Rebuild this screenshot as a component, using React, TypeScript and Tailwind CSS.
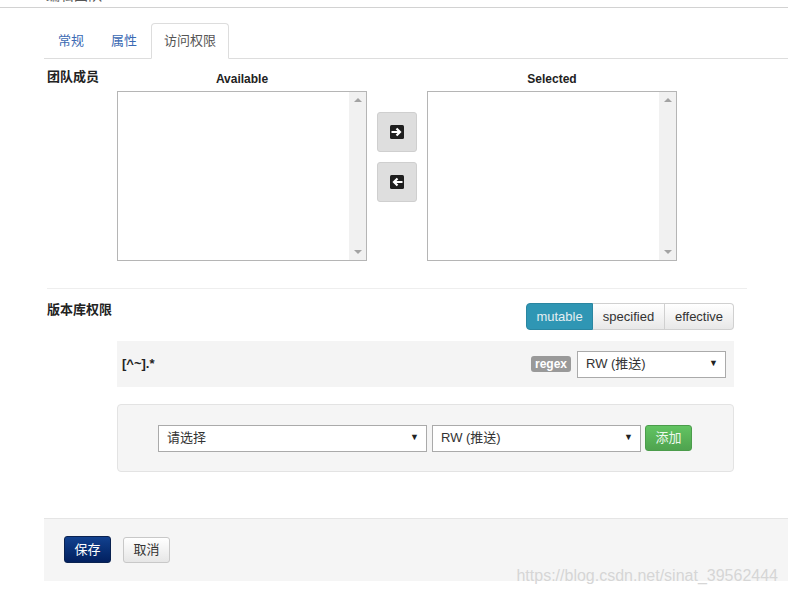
import React from 'react';

const font = 'font-["Liberation_Sans","Noto_Sans_CJK_SC",sans-serif]';

function ListBox() {
  return (
    <div className="flex h-[170px] w-[250px] border border-[#b5b5b5] bg-white">
      <div className="flex-1" />
      <div className="flex w-[17px] flex-col items-center justify-between bg-[#f1f1f1] py-[6px]">
        <span className="h-0 w-0 border-x-[4px] border-b-[4px] border-x-transparent border-b-[#a3a3a3]" />
        <span className="h-0 w-0 border-x-[4px] border-t-[4px] border-x-transparent border-t-[#a3a3a3]" />
      </div>
    </div>
  );
}

function MoveIcon({ dir }: { dir: 'right' | 'left' }) {
  return (
    <svg width="14" height="14" viewBox="0 0 14 14">
      <rect x="0" y="0" width="14" height="14" rx="1.5" fill="#1e1e1e" />
      {dir === 'right' ? (
        <path d="M1.5 7 H10 M6.5 3.5 L10 7 L6.5 10.5" stroke="#fff" strokeWidth="2.2" fill="none" />
      ) : (
        <path d="M12.5 7 H4 M7.5 3.5 L4 7 L7.5 10.5" stroke="#fff" strokeWidth="2.2" fill="none" />
      )}
    </svg>
  );
}

function SelectBox({ label, width }: { label: string; width: string }) {
  return (
    <div className={`flex ${width} h-[27px] items-center justify-between border border-[#aaa] bg-white pl-[8px] pr-[7px] text-[13px] text-[#333]`}>
      <span>{label}</span>
      <span className="text-[9px] text-[#222]">▼</span>
    </div>
  );
}

export default function App() {
  return (
    <div className={`relative h-[595px] w-[788px] overflow-hidden bg-white text-[#333] ${font}`}>
      {/* cut-off page title */}
      <div className="h-[8px] overflow-hidden border-b border-[#d2d2d2]">
        <p className="-mt-[12px] pl-[46px] text-[14px] leading-[14px] text-[#555]">编辑团队</p>
      </div>

      {/* tabs */}
      <ul className="mt-[15px] ml-[44px] flex h-[36px] border-b border-[#ddd] pl-[1px] text-[13px]">
        <li className="mr-[1px] flex h-[36px] items-center border border-transparent px-[12px] text-[#3b6ab3]">常规</li>
        <li className="mr-[1px] flex h-[36px] items-center border border-transparent px-[12px] text-[#3b6ab3]">属性</li>
        <li className="flex h-[36px] items-center rounded-t-[4px] border border-[#ddd] border-b-white bg-white px-[12px] text-[#555]">
          访问权限
        </li>
      </ul>

      {/* team members */}
      <div className="mt-[9px] ml-[47px] flex">
        <div className="w-[70px] text-[13px] font-bold leading-[18px] text-[#222]">团队成员</div>
        <div className="mt-[3px]">
          <div className="h-[17px] text-center text-[12px] font-bold leading-[17px] text-[#222]">Available</div>
          <div className="mt-[3px]">
            <ListBox />
          </div>
        </div>
        <div className="mt-[44px] ml-[10px] flex flex-col gap-[10px]">
          <button className="flex h-[40px] w-[40px] items-center justify-center rounded-[3px] border border-[#cfcfcf] bg-[#dedede]">
            <MoveIcon dir="right" />
          </button>
          <button className="flex h-[40px] w-[40px] items-center justify-center rounded-[3px] border border-[#cfcfcf] bg-[#dedede]">
            <MoveIcon dir="left" />
          </button>
        </div>
        <div className="mt-[3px] ml-[10px]">
          <div className="h-[17px] text-center text-[12px] font-bold leading-[17px] text-[#222]">Selected</div>
          <div className="mt-[3px]">
            <ListBox />
          </div>
        </div>
      </div>

      <div className="mt-[27px] ml-[47px] w-[700px] border-t border-[#eee]" />

      {/* repo permissions */}
      <div className="mt-[12px] ml-[47px] flex w-[687px] items-start justify-between">
        <div className="text-[13px] font-bold leading-[18px] text-[#222]">版本库权限</div>
        <div className="mt-[2px] flex h-[27px] text-[13px]">
          <button className="w-[67px] rounded-l-[4px] border border-[#2a86a1] bg-[#2f96b4] text-[#e4eef2]">mutable</button>
          <button className="w-[72px] border-y border-r border-[#d0d0d0] bg-gradient-to-b from-white to-[#e8e8e8] text-[#333]">specified</button>
          <button className="w-[69px] rounded-r-[4px] border-y border-r border-[#d0d0d0] bg-gradient-to-b from-white to-[#e8e8e8] text-[#333]">effective</button>
        </div>
      </div>

      <div className="mt-[11px] ml-[117px] flex h-[46px] w-[617px] items-center justify-between bg-[#f4f4f4] pl-[5px] pr-[8px]">
        <span className="text-[13px] font-bold text-[#222]">[^~].*</span>
        <div className="flex items-center gap-[6px]">
          <span className="flex h-[16px] items-center rounded-[3px] bg-[#999] px-[4px] text-[12px] font-bold leading-none text-white">regex</span>
          <SelectBox label="RW (推送)" width="w-[149px]" />
        </div>
      </div>

      <div className="mt-[17px] ml-[117px] flex h-[68px] w-[617px] items-center rounded-[4px] border border-[#e3e3e3] bg-[#f5f5f5] pl-[40px]">
        <SelectBox label="请选择" width="w-[269px]" />
        <div className="ml-[5px]">
          <SelectBox label="RW (推送)" width="w-[209px]" />
        </div>
        <button className="ml-[4px] h-[26px] w-[47px] rounded-[3px] border border-[#4b9c4b] bg-gradient-to-b from-[#62c462] to-[#4fa34f] text-[13px] text-[#eef8ee]">
          添加
        </button>
      </div>

      {/* footer */}
      <div className="mt-[46px] ml-[44px] flex h-[63px] items-start gap-[12px] border-t border-[#e5e5e5] bg-[#f5f5f5] pl-[20px] pt-[17px]">
        <button className="h-[27px] w-[47px] rounded-[3px] border border-[#0a2250] bg-gradient-to-b from-[#12418f] to-[#03205f] text-[13px] text-white">
          保存
        </button>
        <button className="mt-[1px] h-[26px] w-[47px] rounded-[3px] border border-[#c8c8c8] bg-gradient-to-b from-white to-[#e6e6e6] text-[13px] text-[#333]">
          取消
        </button>
      </div>

      <div className="absolute right-[10px] top-[566px] text-[16px] leading-[20px] text-[#d6d6d6]">
        https://blog.csdn.net/sinat_39562444
      </div>
    </div>
  );
}
